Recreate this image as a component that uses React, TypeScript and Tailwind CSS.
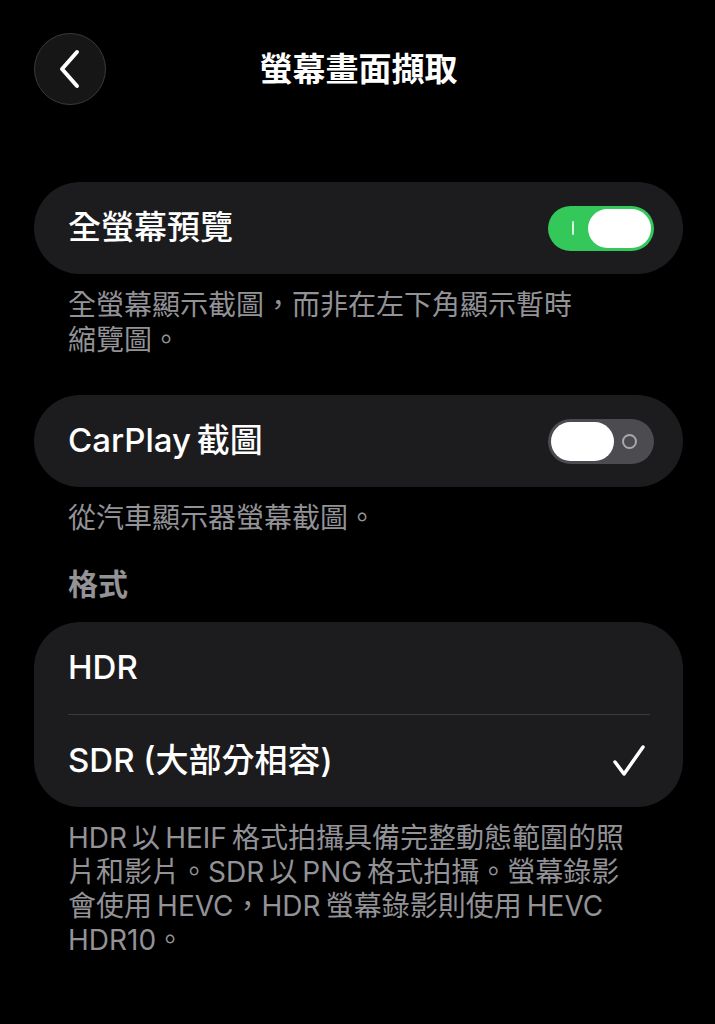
import React from 'react';

const font = { fontFamily: '"Inter", "Noto Sans CJK TC", sans-serif' };

const Toggle: React.FC<{ on: boolean }> = ({ on }) => {
  if (on) {
    return (
      <div className="flex h-[45px] w-[106px] items-center justify-between rounded-full bg-[#34c759] pl-[24px] pr-[3px]">
        <span className="h-[14px] w-[2px] rounded-full bg-white/80" />
        <span className="h-[39px] w-[63px] rounded-full bg-white" />
      </div>
    );
  }
  return (
    <div className="flex h-[45px] w-[106px] items-center justify-between rounded-full bg-[#4b4b50] pl-[3px] pr-[17px]">
      <span className="h-[39px] w-[63px] rounded-full bg-white" />
      <span className="h-[15px] w-[15px] rounded-full border-2 border-[#a8a8ad]" />
    </div>
  );
};

const App: React.FC = () => {
  return (
    <div className="min-h-[1024px] w-full bg-black pl-[34px] pr-[32px] pt-[33px] text-white" style={font}>
      <div className="grid h-[72px] grid-cols-[72px_1fr_72px] items-center">
        <button className="flex h-[72px] w-[72px] items-center justify-center rounded-full border border-[#3a3a3c] bg-[#161617]">
          <svg width="26" height="40" viewBox="0 0 26 40" fill="none">
            <path d="M20 3 L5 20 L20 37" stroke="white" strokeWidth="4" strokeLinecap="round" strokeLinejoin="round" />
          </svg>
        </button>
        <h1 className="text-center text-[33px] font-bold leading-none">螢幕畫面擷取</h1>
        <div />
      </div>

      <div className="mt-[77px] flex h-[92px] items-center justify-between rounded-full bg-[#1c1c1e] pl-[34px] pr-[29px]">
        <span className="text-[33px] font-medium">全螢幕預覽</span>
        <Toggle on />
      </div>
      <p className="mt-[14px] pl-[34px] text-[28px] leading-[35px] text-[#929297]">
        全螢幕顯示截圖，而非在左下角顯示暫時
        <br />
        縮覽圖。
      </p>

      <div className="mt-[37px] flex h-[92px] items-center justify-between rounded-full bg-[#1c1c1e] pl-[34px] pr-[29px]">
        <span className="text-[33px] font-medium">CarPlay&#8201;截圖</span>
        <Toggle on={false} />
      </div>
      <p className="mt-[14px] pl-[34px] text-[28px] leading-[35px] text-[#929297]">從汽車顯示器螢幕截圖。</p>

      <h2 className="mt-[28px] pl-[34px] text-[30px] font-bold leading-[40px] text-[#929297]">格式</h2>

      <div className="mt-[18px] rounded-[46px] bg-[#1c1c1e]">
        <div className="flex h-[92px] items-center pl-[34px]">
          <span className="text-[33px] font-medium">HDR</span>
        </div>
        <div className="ml-[34px] mr-[33px] h-px bg-[#3a3a3c]" />
        <div className="flex h-[92px] items-center justify-between pl-[34px] pr-[37px]">
          <span className="text-[33px] font-medium">SDR (大部分相容)</span>
          <svg width="34" height="32" viewBox="0 0 34 32" fill="none">
            <path d="M3 17 L12 29 L31 2" stroke="white" strokeWidth="3.5" strokeLinecap="round" strokeLinejoin="round" />
          </svg>
        </div>
      </div>

      <p className="mt-[14px] pl-[34px] text-[28px] leading-[34px] text-[#929297]">
        HDR&#8201;以&#8201;HEIF&#8201;格式拍攝具備完整動態範圍的照
        <br />
        片和影片。SDR&#8201;以&#8201;PNG&#8201;格式拍攝。螢幕錄影
        <br />
        會使用&#8201;HEVC，HDR&#8201;螢幕錄影則使用&#8201;HEVC
        <br />
        HDR10。
      </p>
    </div>
  );
};

export default App;
